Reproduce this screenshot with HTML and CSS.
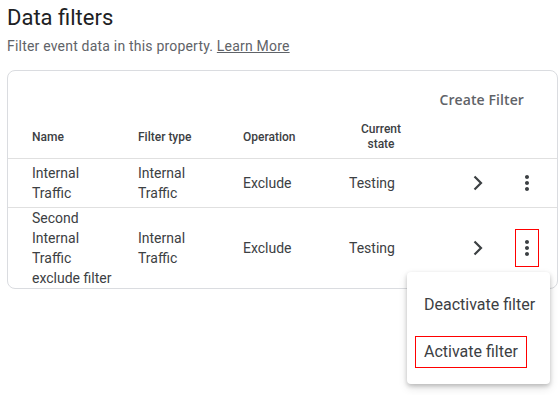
FILE: index.html
```html
<!DOCTYPE html>
<html lang="en">
<head>
  <meta charset="UTF-8">
  <title>Data filters</title>
  <link rel="stylesheet" href="styles.css">
</head>
<body>
  <div class="page">
    <h1 class="title">Data filters</h1>
    <p class="subtitle">Filter event data in this property. <a href="#">Learn More</a></p>

    <div class="card">
      <div class="toolbar">
        <button class="create-btn">Create Filter</button>
      </div>

      <div class="row head">
        <div>Name</div>
        <div>Filter type</div>
        <div>Operation</div>
        <div class="state-head">Current state</div>
        <div></div>
        <div></div>
      </div>

      <div class="row">
        <div>Internal<br>Traffic</div>
        <div>Internal<br>Traffic</div>
        <div>Exclude</div>
        <div>Testing</div>
        <div class="icon-cell">
          <svg class="chevron" viewBox="0 0 32 32"><polyline points="12.5,9.5 19,16 12.5,22.5"/></svg>
        </div>
        <div class="icon-cell">
          <span class="kebab"><svg viewBox="0 0 24 24"><path d="M12 8c1.1 0 2-.9 2-2s-.9-2-2-2-2 .9-2 2 .9 2 2 2zm0 2c-1.1 0-2 .9-2 2s.9 2 2 2 2-.9 2-2-.9-2-2-2zm0 6c-1.1 0-2 .9-2 2s.9 2 2 2 2-.9 2-2-.9-2-2-2z"/></svg></span>
        </div>
      </div>

      <div class="row">
        <div>Second<br>Internal<br>Traffic<br>exclude filter</div>
        <div>Internal<br>Traffic</div>
        <div>Exclude</div>
        <div>Testing</div>
        <div class="icon-cell">
          <svg class="chevron" viewBox="0 0 32 32"><polyline points="12.5,9.5 19,16 12.5,22.5"/></svg>
        </div>
        <div class="icon-cell">
          <span class="kebab marked"><svg viewBox="0 0 24 24"><path d="M12 8c1.1 0 2-.9 2-2s-.9-2-2-2-2 .9-2 2 .9 2 2 2zm0 2c-1.1 0-2 .9-2 2s.9 2 2 2 2-.9 2-2-.9-2-2-2zm0 6c-1.1 0-2 .9-2 2s.9 2 2 2 2-.9 2-2-.9-2-2-2z"/></svg></span>
        </div>
      </div>
    </div>
  </div>

  <div class="menu">
    <div class="menu-item">Deactivate filter</div>
    <div class="menu-item"><span class="marked-text">Activate filter</span></div>
  </div>
</body>
</html>
```

FILE: styles.css
```css
body {
  margin: 0;
  font-family: Roboto, "Liberation Sans", sans-serif;
  color: #3c4043;
  background: #fff;
  overflow: hidden;
  position: relative;
  height: 395px;
}

.page {
  padding: 0 0 0 7px;
}

.title {
  margin: 4px 0 0;
  font-size: 22px;
  line-height: 28px;
  font-weight: 400;
  color: #202124;
}

.subtitle {
  margin: 4px 0 0;
  font-size: 14px;
  line-height: 20px;
  letter-spacing: 0.2px;
  color: #5f6368;
}

.subtitle a {
  color: #5f6368;
  text-decoration: underline;
}

.card {
  margin-top: 14px;
  width: 551px;
  box-sizing: border-box;
  border: 1px solid #dadce0;
  border-radius: 8px;
  overflow: hidden;
}

.toolbar {
  height: 45px;
  display: flex;
  justify-content: flex-end;
  padding: 17px 33px 0 0;
  box-sizing: border-box;
}

.create-btn {
  border: none;
  background: none;
  padding: 0;
  height: 22px;
  font-family: "Open Sans", Roboto, sans-serif;
  font-size: 14px;
  font-weight: 600;
  letter-spacing: 0.1px;
  color: #5f6368;
}

.row {
  display: grid;
  grid-template-columns: 106px 105px 106px 64px 81px 45px;
  padding: 0 18px 0 24px;
  min-height: 48px;
  align-items: center;
  border-top: 1px solid #e0e0e0;
  font-size: 14px;
  line-height: 20px;
}

.row.head {
  border-top: none;
  min-height: 42px;
  font-size: 12px;
  font-weight: 500;
  line-height: 15px;
  color: #3c4043;
}

.state-head {
  text-align: center;
}

.icon-cell {
  display: flex;
  justify-content: flex-end;
  align-items: center;
}

.chevron {
  width: 32px;
  height: 32px;
  display: block;
  fill: none;
  stroke: #3c4043;
  stroke-width: 2.2;
}

.kebab {
  display: block;
  width: 24px;
  height: 24px;
  box-sizing: content-box;
}

.kebab svg {
  width: 24px;
  height: 24px;
  fill: #3c4043;
  display: block;
}

.kebab.marked {
  padding: 7px 0;
  outline: 1px solid #ff0000;
  outline-offset: -1px;
}

.menu {
  position: absolute;
  left: 407px;
  top: 272px;
  width: 143px;
  padding: 8px 0;
  background: #fff;
  border-radius: 4px;
  box-shadow: 0 2px 4px rgba(0, 0, 0, 0.2), 0 4px 10px rgba(0, 0, 0, 0.12);
}

.menu-item {
  height: 48px;
  display: flex;
  align-items: center;
  padding-left: 17px;
  font-size: 16px;
  color: #3c4043;
  white-space: nowrap;
}

.marked-text {
  margin-left: -8px;
  padding: 5px 8px;
  line-height: 20px;
  outline: 1px solid #ff0000;
}
```
